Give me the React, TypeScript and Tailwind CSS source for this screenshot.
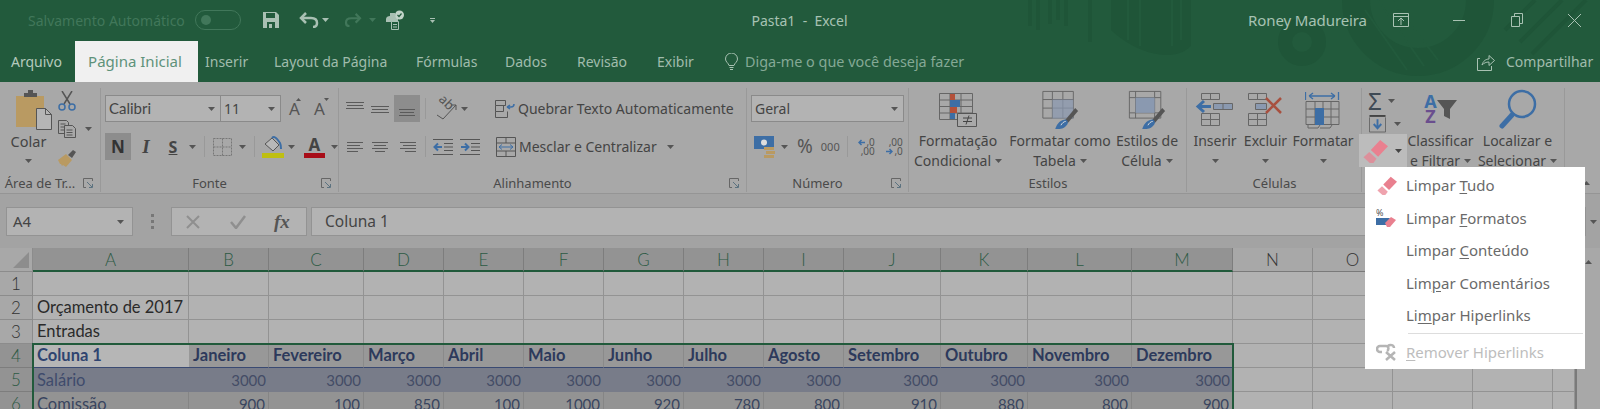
import React from "react";

const UI = "font-['Noto_Sans',sans-serif]";
const CELL = "font-['Lato',sans-serif]";

function Caret({ c = "#555", className = "" }: { c?: string; className?: string }) {
  return (
    <svg width="7" height="4" viewBox="0 0 7 4" className={`block shrink-0 ${className}`}>
      <path d="M0 0h7L3.5 4z" fill={c} />
    </svg>
  );
}

function Launcher() {
  return (
    <svg width="10" height="10" viewBox="0 0 10 10" className="block shrink-0" fill="none" stroke="#666">
      <path d="M9.5 3V.5H.5v9H3" />
      <path d="M4 4l5 5M9.5 6v3.5H6" stroke="#5b7280" />
    </svg>
  );
}

function Group({ w, label, launcher, children }: { w: string; label: string; launcher?: boolean; children: React.ReactNode }) {
  return (
    <div className={`${w} shrink-0 flex flex-col pt-[6px] relative`}>
      <div className="h-[85px] flex">{children}</div>
      <div className="h-[20px] flex items-center text-[13px] text-[#4a4a4a] leading-none">
        <div className="flex-1 text-center whitespace-nowrap">{label}</div>
        {launcher ? <div className="w-[16px] mr-[5px] flex justify-center"><Launcher /></div> : null}
      </div>
      <div className="absolute right-0 top-[6px] bottom-[1px] w-px bg-[#999999]" />
    </div>
  );
}

function LargeBtn({ w, icon, lines, caretLine, blank }: { w: string; icon: React.ReactNode; lines: string[]; caretLine?: boolean; blank?: boolean }) {
  return (
    <div className={`${w} shrink-0 flex flex-col items-center`}>
      <div className="h-[43px] flex items-center justify-center">{icon}</div>
      {lines.map((l, i) => (
        <div key={i} className="h-[20px] leading-[20px] whitespace-nowrap flex items-center gap-[4px] text-[#444444]">
          {l}
          {caretLine && i === lines.length - 1 ? <Caret /> : null}
        </div>
      ))}
      {blank ? <div className="h-[20px] flex items-center"><Caret /></div> : null}
    </div>
  );
}

function Lines({ ys, w = 18 }: { ys: [number, number, number][]; w?: number }) {
  return (
    <svg width={w} height="16" viewBox={`0 0 ${w} 16`} className="block shrink-0" stroke="#5a5a5a" fill="none">
      {ys.map(([y, a, b], i) => <path key={i} d={`M${a} ${y}.5H${b}`} />)}
    </svg>
  );
}

function Eraser({ s = 24, c = "#e9808f" }: { s?: number; c?: string }) {
  return (
    <svg width={s} height={s} viewBox="0 0 24 24" className="block shrink-0">
      <path d="M7.500 11.500L16.500 2 24 8l-9.500 10z" fill={c} />
      <path d="M6 13.500l7 6.500-3 4H6.500L.5 18.500z" fill={c} opacity="0.72" />
    </svg>
  );
}

const PaintBrush = () => (
  <g>
    <path d="M25 32l11-13 3 3-11 13z" fill="#555" />
    <path d="M15 41c2-6 6-10 11-10 3 1 3 5 0 7-3 3-7 3-11 3z" fill="#3d6ea5" />
    <path d="M21 37c1-2 3-4 5-4" stroke="#ddd" fill="none" />
  </g>
);

function CellIcon() {
  return (
    <svg width="40" height="36" viewBox="0 0 40 36" className="block" fill="none">
      <path d="M1.500 1.500h33v26h-33zM1.500 8h33M1.500 14.500h33M1.500 21h33M12 1.500v26M23 1.500v26" stroke="#666" />
      <path d="M12 2h5v6h-5z" fill="#b4513a" />
      <path d="M12 8h10v7H12z" fill="#3d6ea5" />
      <path d="M12 15h7v6h-7z" fill="#b4513a" />
      <path d="M12 21h5v6h-5z" fill="#3d6ea5" />
      <path d="M19.500 21.500h19v13h-19z" fill="#a9a9a9" stroke="#555" />
      <path d="M25 26h9M25 29.500h9M31 23.500l-3 9" stroke="#444" />
    </svg>
  );
}

function TableStyleIcon() {
  return (
    <svg width="40" height="40" viewBox="0 0 40 42" className="block" fill="none">
      <path d="M2 1.500h32v28H2zM2 10h32M2 19h32M12 1.500v28M23 1.500v28" stroke="#666" />
      <path d="M12 10h22v20H12z" fill="#8a99b0" opacity="0.7" />
      <PaintBrush />
    </svg>
  );
}

function CellStyleIcon() {
  return (
    <svg width="40" height="40" viewBox="0 0 40 42" className="block" fill="none">
      <path d="M1.500 1.500h33v28h-33zM1.500 8h33M1.500 24h33M8 1.500v28M28 1.500v28" stroke="#666" />
      <path d="M8 8h20v16H8z" fill="#8a99b0" />
      <PaintBrush />
    </svg>
  );
}

const letters = ["A", "B", "C", "D", "E", "F", "G", "H", "I", "J", "K", "L", "M", "N", "O", "P", "Q", ""];
const months = ["Janeiro", "Fevereiro", "Março", "Abril", "Maio", "Junho", "Julho", "Agosto", "Setembro", "Outubro", "Novembro", "Dezembro"];
const commissions = [900, 100, 850, 100, 1000, 920, 780, 800, 910, 880, 800, 900];

function RowCells({ n }: { n: number }) {
  const sel = n >= 4;
  const out: React.ReactNode[] = [];
  out.push(
    <div key="h" className={`flex items-center justify-center border-r border-b ${sel ? "bg-[#939393] text-[#2c5a44] border-[#7d7d7d]" : "bg-[#a8a8a8] text-[#333333] border-[#8c8c8c]"} text-[17px] font-light`}>{n}</div>
  );
  for (let i = 0; i < 18; i++) {
    const tableCol = i <= 12;
    let content = "";
    let cls = "border-r border-b border-[#939393] bg-[#b2b2b2] text-[#2a2a2a]";
    let align = "justify-start pl-[4px]";
    if (n === 2 && i === 0) content = "Orçamento de 2017";
    if (n === 3 && i === 0) content = "Entradas";
    if (n === 4 && tableCol) {
      content = i === 0 ? "Coluna 1" : months[i - 1];
      cls = i === 0
        ? "border-b border-[#3a4a72] bg-[#b6b6b6] text-[#2f4470] font-bold"
        : "border-r border-b border-b-[#3a4a72] border-r-[#8a8a8a] bg-[#989898] text-[#2d3a5c] font-bold";
    }
    if (n === 5 && tableCol) {
      cls = i === 0 ? "bg-[#787c89] text-[#3f4b6c]" : "bg-[#787c89] text-[#444c66] text-[15px]";
      content = i === 0 ? "Salário" : "3000";
      align = i === 0 ? "justify-start pl-[4px]" : "justify-end pr-[3px]";
    }
    if (n === 6 && tableCol) {
      cls = i === 0 ? "border-r border-[#858585] bg-[#939393] text-[#39455f]" : "border-r border-[#858585] bg-[#939393] text-[#39455f] text-[15px]";
      content = i === 0 ? "Comissão" : String(commissions[i - 1]);
      align = i === 0 ? "justify-start pl-[4px]" : "justify-end pr-[3px]";
    }
    out.push(
      <div key={i} className={`flex items-center whitespace-nowrap overflow-visible ${align} ${cls}`}>{content}</div>
    );
  }
  out.push(<div key="sb" className="bg-[#a8a8a8] border-l-2 border-[#7a7a7a]" />);
  return <>{out}</>;
}

function MenuItem({ icon, pre, u, post, disabled }: { icon?: React.ReactNode; pre: string; u: string; post: string; disabled?: boolean }) {
  return (
    <div className={`h-[32.500px] flex items-center ${disabled ? "text-[#bdbdbd]" : "text-[#6a6a6a]"}`}>
      <div className="w-[41px] flex justify-center pl-[2px]">{icon}</div>
      <span>{pre}<span className="underline underline-offset-2">{u}</span>{post}</span>
    </div>
  );
}

export default function App() {
  const gridTemplate = "33px 156px 80px 95px 80px 80px 80px 80px 80px 80px 97px 87px 104px 101px 80px 80px 80px 80px 22px 25px";
  return (
    <div className={`w-[1600px] h-[409px] overflow-hidden relative bg-[#a3a3a3] ${UI} text-[14px]`}>
      <div className="relative bg-[#225a3c]">
        <svg width="600" height="82" viewBox="0 0 600 82" className="absolute left-[1000px] top-0" fill="none">
          <g stroke="#1f5538" strokeWidth="4">
            <path d="M30 0v26M38 0v30M50 0v24M58 0v20M66 0v26M90 0v42" />
          </g>
          <path d="M111 0h80v46c-10 10-24 10-34 8-16-2-36-14-46-24z" fill="#1f5538" />
          <path d="M128 0v40M140 0v46M172 0v46M181 0v40" stroke="#225a3c" strokeWidth="2" />
          <circle cx="302" cy="42" r="17" stroke="#1f5538" strokeWidth="14" />
          <circle cx="418" cy="0" r="62" stroke="#1f5538" strokeWidth="28" />
          <path d="M365 10l42 60M378 0l46 66M392 0l46 60" stroke="#225a3c" strokeWidth="2" />
          <path d="M505 30l30-30M520 42l42-42M532 54l54-54" stroke="#1f5538" strokeWidth="4" />
        </svg>

        {/* Title bar */}
        <div className="h-[40px] flex items-center text-[#a7c2b3] relative">
          <div className="ml-[28px] w-[167px] text-[#41775a] whitespace-nowrap">Salvamento Automático</div>
          <div className="w-[46px] h-[20px] rounded-full border border-[#41775a] flex items-center pl-[5px]"><div className="w-[10px] h-[10px] rounded-full bg-[#41775a]" /></div>
          <svg width="16" height="16" viewBox="0 0 16 16" className="ml-[22px] block">
            <path d="M0 0h13l3 3v13H0z" fill="#a9c0b3" />
            <path d="M3 1h9v5H3z" fill="#225a3c" />
            <path d="M4 10h8v6H4z" fill="#225a3c" />
            <path d="M6 12h3v4H6z" fill="#a9c0b3" />
          </svg>
          <svg width="20" height="16" viewBox="0 0 20 16" className="ml-[20px] block" fill="none" stroke="#a9c0b3" strokeWidth="2.500">
            <path d="M7 1L2 6l5 5" />
            <path d="M2 6h10c4 0 6 2 6 5 0 2-1 4-4 4" />
          </svg>
          <Caret c="#a9c0b3" className="ml-[3px]" />
          <svg width="18" height="14" viewBox="0 0 20 16" className="ml-[15px] block" fill="none" stroke="#41775a" strokeWidth="2.500">
            <path d="M13 1l5 5-5 5" />
            <path d="M18 6H8C4 6 2 8 2 11c0 2 1 4 4 4" />
          </svg>
          <Caret c="#41775a" className="ml-[7px]" />
          <svg width="20" height="20" viewBox="0 0 20 20" className="ml-[9px] block" fill="none">
            <path d="M1 9c0-2 2-3 4-3V3h5v3c2 0 3 1 3 3v3H1z" fill="#a9c0b3" />
            <circle cx="14.500" cy="5" r="4.500" fill="#c2d4c9" />
            <path d="M12.500 5l1.500 1.500 2.500-3" stroke="#225a3c" strokeWidth="1.200" />
            <path d="M6.500 11.500h7v8h-7z" fill="#225a3c" stroke="#a9c0b3" />
            <path d="M8 14.500h4M8 17h4" stroke="#a9c0b3" />
          </svg>
          <div className="ml-[25px] w-[5px] flex flex-col gap-[1px]"><div className="h-px bg-[#a9c0b3]" /><Caret c="#a9c0b3" className="w-[5px] h-[3px]" /></div>
          <div className="ml-[316px] w-[97px] text-center whitespace-nowrap">Pasta1 &nbsp;-&nbsp; Excel</div>
          <div className="ml-[400px] w-[113px] whitespace-nowrap text-[15px] tracking-[-0.1px]">Roney Madureira</div>
          <svg width="16" height="14" viewBox="0 0 16 14" className="ml-[32px] block" fill="none" stroke="#a9c2b3">
            <path d="M.5.500h15v13H.5zM.5 3.500h15M8 12V5M5 8l3-3 3 3" />
          </svg>
          <div className="ml-[44px] w-[12px] h-px bg-[#a9c2b3]" />
          <svg width="12" height="14" viewBox="0 0 12 14" className="ml-[46px] block" fill="none" stroke="#a9c2b3">
            <path d="M.5 3.500h8v10h-8zM3.500 3.500V.5h8v10h-3" />
          </svg>
          <svg width="13" height="13" viewBox="0 0 13 13" className="ml-[45px] block" fill="none" stroke="#a9c2b3">
            <path d="M0 0l13 13M13 0L0 13" />
          </svg>
        </div>

        {/* Tabs */}
        <div className="h-[42px] relative flex items-end text-[#a0bcac] z-10">
          <div className="flex items-center h-[41px] w-full whitespace-nowrap">
            <div className="ml-[11px] w-[64px] text-[#b5cabd]">Arquivo</div>
            <div className="w-[123px] h-[41px] bg-[#f0f0f0] text-[#5e927a] text-[15px] flex items-center justify-center pr-[3px]">Página Inicial</div>
            <div className="ml-[7px] w-[69px]">Inserir</div>
            <div className="w-[142px]">Layout da Página</div>
            <div className="w-[89px]">Fórmulas</div>
            <div className="w-[72px]">Dados</div>
            <div className="w-[80px]">Revisão</div>
            <div className="w-[68px]">Exibir</div>
            <svg width="13" height="18" viewBox="0 0 13 18" className="block" fill="none" stroke="#a9c2b3">
              <path d="M4 12.500C3.500 10 .5 9 .5 6a6 6 0 0 1 12 0c0 3-3 4-3.500 6.500zM4.500 14.500h4M5 16.500h3" />
            </svg>
            <div className="ml-[7px] w-[732px] text-[#85a996] text-[14.400px]">Diga-me o que você deseja fazer</div>
            <svg width="18" height="18" viewBox="0 0 18 18" className="block" fill="none" stroke="#a9c2b3">
              <path d="M3 5.500H.5v12h14V13M5 12c1-4 4-6 7-6V2.500l5.500 5-5.500 5V9c-3 0-5 1-7 3z" />
            </svg>
            <div className="ml-[11px]">Compartilhar</div>
          </div>
        </div>
      </div>

      {/* Ribbon */}
      <div className="h-[112px] bg-[#a8a8a8] flex border-b border-[#959595] text-[14px] text-[#444444]">
        <Group w="w-[101px]" label="Área de Tr..." launcher>
          <div className="w-[57px] flex flex-col items-center">
            <div className="h-[43px] flex items-center">
              <svg width="36" height="40" viewBox="0 0 36 40" className="block ml-[10px]">
                <path d="M0 6h28v31H0z" fill="#b99a62" />
                <path d="M8 3h4V0h5v3h4v4H8z" fill="#555" />
                <path d="M20.500 18.500h9l6 6v15h-15z" fill="#b5b5b5" stroke="#555" />
                <path d="M29.500 18.500v6h6" fill="none" stroke="#555" />
              </svg>
            </div>
            <div className="h-[20px] leading-[20px] text-[14.500px]">Colar</div>
            <div className="h-[20px] flex items-center"><Caret /></div>
          </div>
          <div className="flex flex-col ml-[1px]">
            <div className="h-[26px] flex items-center">
              <svg width="18" height="20" viewBox="0 0 18 20" fill="none" className="block" strokeWidth="1.500">
                <path d="M4 0l8 13M14 0L6 13" stroke="#555" />
                <circle cx="4" cy="16" r="3" stroke="#3d6ea5" />
                <circle cx="14" cy="16" r="3" stroke="#3d6ea5" />
              </svg>
            </div>
            <div className="h-[30px] flex items-center gap-[9px]">
              <svg width="18" height="18" viewBox="0 0 18 18" fill="none" stroke="#555" className="block">
                <path d="M.5.500h8l2 2v11H.5zM2.500 4h5M2.500 7h5M2.500 10h4" />
                <path d="M6.500 5.500h8l3 3v9h-11z" fill="#a8a8a8" />
                <path d="M8.500 10h6M8.500 12.500h6M8.500 15h6" />
              </svg>
              <Caret />
            </div>
            <div className="h-[29px] flex items-center">
              <svg width="18" height="17" viewBox="0 0 18 17" className="block">
                <path d="M10 5l5-5 3 2-4 6z" fill="#555" />
                <path d="M0 10l8-6 6 6-6 7-3-2-1 1-1-2-1 0z" fill="#b99a62" />
              </svg>
            </div>
          </div>
        </Group>

        <Group w="w-[238px]" label="Fonte" launcher>
          <div className="flex flex-col pl-[4px] pt-[7px]">
            <div className="flex items-center h-[27px]">
              <div className="w-[116px] h-[27px] bg-[#b3b3b3] border border-[#8a8a8a] flex items-center justify-between px-[3px] pr-[5px] font-['Lato',sans-serif] text-[15px]">Calibri<Caret /></div>
              <div className="w-[60px] h-[27px] bg-[#b3b3b3] border border-[#8a8a8a] border-l-0 flex items-center justify-between px-[3px] pr-[5px] text-[14px]">11<Caret /></div>
              <div className="ml-[8px] w-[22px] text-[17px] leading-none text-[#555] relative">A<div className="absolute left-[7px] -top-[2px]"><Caret c="#555" className="rotate-180 w-[5px] h-[3px]" /></div></div>
              <div className="ml-[3px] w-[20px] text-[17px] leading-none text-[#555] relative">A<div className="absolute left-[10px] -top-[2px]"><Caret c="#555" className="w-[5px] h-[3px]" /></div></div>
            </div>
            <div className="flex items-center h-[27px] mt-[11px]">
              <div className="w-[26px] h-[27px] bg-[#8d8d8d] flex items-center justify-center font-bold text-[17px] text-[#333]">N</div>
              <div className="w-[30px] text-center font-['Liberation_Serif',serif] italic font-bold text-[19px] text-[#444] leading-none">I</div>
              <div className="w-[24px] text-center font-bold text-[16px] text-[#444] underline leading-none">S</div>
              <Caret className="ml-[4px]" />
              <div className="w-px h-[21px] bg-[#999] ml-[8px]" />
              <svg width="20" height="18" viewBox="0 0 20 18" fill="none" className="block ml-[8px]" stroke="#777" strokeDasharray="2 1">
                <path d="M.5.500h18v17H.5zM9.500.5v17M.5 9h18" />
              </svg>
              <Caret className="ml-[6px]" />
              <div className="w-px h-[21px] bg-[#999] ml-[8px]" />
              <svg width="24" height="22" viewBox="0 0 24 22" className="block ml-[6px]" fill="none">
                <path d="M4 8l7-6 7 7-6 6z" stroke="#555" fill="#b8b8b8" />
                <path d="M11 2c2-2 4-1 8 5 1 2 1 4 1 6" stroke="#3d6ea5" strokeWidth="2" />
                <path d="M1 17h22v5H1z" fill="#bfbf12" />
              </svg>
              <Caret className="ml-[3px]" />
              <div className="ml-[9px] w-[21px] flex flex-col items-center">
                <div className="font-bold text-[17px] leading-[17px] text-[#444]">A</div>
                <div className="w-[21px] h-[5px] bg-[#a80d18]" />
              </div>
              <Caret className="ml-[6px]" />
            </div>
          </div>
        </Group>

        <Group w="w-[408px]" label="Alinhamento" launcher>
          <div className="flex flex-col pl-[6px] pt-[7px]">
            <div className="flex items-center h-[27px]">
              <div className="w-[21px]"><Lines ys={[[1, 1, 19], [4, 2, 18], [7, 1, 19]]} w={20} /></div>
              <div className="w-[28px] flex justify-center"><Lines ys={[[5, 1, 19], [8, 2, 18], [11, 1, 19]]} w={20} /></div>
              <div className="w-[26px] h-[27px] bg-[#8d8d8d] flex items-center justify-center"><Lines ys={[[8, 2, 18], [11, 3, 17], [14, 2, 18]]} w={20} /></div>
              <div className="w-px h-[21px] bg-[#999] ml-[5px]" />
              <svg width="26" height="22" viewBox="0 0 26 22" className="block ml-[7px] overflow-visible" fill="none" stroke="#555">
                <text x="5" y="2" fontSize="13" fill="#555" stroke="none" transform="rotate(45 5 2)">ab</text>
                <path d="M4 17L10 21L23 7M23 7h-5M23 7v5" />
              </svg>
              <Caret className="ml-[2px]" />
              <div className="ml-[27px] flex items-center">
                <svg width="20" height="18" viewBox="0 0 20 18" className="block" fill="none" stroke="#555">
                  <path d="M.5.500h10v5H.5zM.5 5.500v6h8v-6M.5 11.500v6h12v-6" />
                  <path d="M12 7h4c2 0 3-1 3-3M12 7l3-2M12 7l3 2" stroke="#3d6ea5" strokeWidth="1.500" />
                </svg>
                <div className="ml-[3px] whitespace-nowrap text-[14px]">Quebrar Texto Automaticamente</div>
              </div>
            </div>
            <div className="flex items-center h-[27px] mt-[11px]">
              <div className="w-[27px] pl-[2px]"><Lines ys={[[3, 0, 16], [6, 0, 13], [9, 0, 16], [12, 0, 11]]} w={17} /></div>
              <div className="w-[28px]"><Lines ys={[[3, 0, 16], [6, 2, 14], [9, 0, 16], [12, 3, 13]]} w={17} /></div>
              <div className="w-[20px]"><Lines ys={[[3, 0, 16], [6, 3, 16], [9, 0, 16], [12, 5, 16]]} w={17} /></div>
              <div className="w-px h-[21px] bg-[#999] ml-[5px]" />
              <svg width="20" height="18" viewBox="0 0 20 18" className="block ml-[7px]" fill="none">
                <path d="M0 1.500h20M0 16.500h20M11 5.500h9M11 9h9M11 12.500h9" stroke="#555" />
                <path d="M9 9H2M5 5.500L1.500 9 5 12.500" stroke="#3d6ea5" strokeWidth="2" />
              </svg>
              <svg width="20" height="18" viewBox="0 0 20 18" className="block ml-[7px]" fill="none">
                <path d="M0 1.500h20M0 16.500h20M11 5.500h9M11 9h9M11 12.500h9" stroke="#555" />
                <path d="M1 9h7M5 5.500L8.500 9 5 12.500" stroke="#3d6ea5" strokeWidth="2" />
              </svg>
              <div className="ml-[16px] flex items-center">
                <svg width="20" height="20" viewBox="0 0 20 20" className="block" fill="none" stroke="#555">
                  <path d="M.5.500h19v19H.5zM.5 6h19M.5 14h19M10 .5V6M10 14v5.500" />
                  <path d="M3 10h14M6 7.500L3 10l3 2.500M14 7.500l3 2.500-3 2.500" stroke="#3d6ea5" />
                </svg>
                <div className="ml-[3px] whitespace-nowrap text-[14px]">Mesclar e Centralizar</div>
                <Caret className="ml-[10px]" />
              </div>
            </div>
          </div>
        </Group>

        <Group w="w-[162px]" label="Número" launcher>
          <div className="flex flex-col pl-[4px] pt-[7px]">
            <div className="w-[153px] h-[27px] bg-[#b3b3b3] border border-[#8a8a8a] flex items-center justify-between px-[3px] pr-[5px] text-[14px]">Geral<Caret /></div>
            <div className="flex items-center h-[27px] mt-[11px]">
              <svg width="22" height="22" viewBox="0 0 22 22" className="block ml-[3px]">
                <path d="M0 0h20v13H0z" fill="#3d6ea5" />
                <circle cx="10" cy="6.500" r="3" fill="#ddd" />
                <path d="M10 11h10v3H10zM12 15h9v3h-9zM10 19h10v3H10z" fill="#b99a62" />
              </svg>
              <Caret className="ml-[5px]" />
              <div className="ml-[9px] text-[19px] leading-none text-[#555]">%</div>
              <div className="ml-[8px] text-[11px] leading-none text-[#555] w-[20px]">000</div>
              <div className="w-px h-[21px] bg-[#999] ml-[6px]" />
              <div className="ml-[9px] flex flex-col text-[10px] leading-[9px] text-[#555] w-[18px] items-end">
                <div className="flex items-center gap-[1px]">
                  <svg width="7" height="7" viewBox="0 0 7 7" className="block" fill="none" stroke="#3d6ea5" strokeWidth="1.500"><path d="M7 3.500H1M3.500 1L1 3.500 3.500 6" /></svg>,0
                </div>
                <div>,00</div>
              </div>
              <div className="ml-[10px] flex flex-col text-[10px] leading-[9px] text-[#555] w-[18px] items-end">
                <div>,00</div>
                <div className="flex items-center gap-[1px]">
                  <svg width="7" height="7" viewBox="0 0 7 7" className="block" fill="none" stroke="#3d6ea5" strokeWidth="1.500"><path d="M0 3.500h6M3.500 1L6 3.500 3.500 6" /></svg>,0
                </div>
              </div>
            </div>
          </div>
        </Group>

        <Group w="w-[278px]" label="Estilos">
          <LargeBtn w="w-[98px]" icon={<CellIcon />} lines={["Formatação", "Condicional"]} caretLine />
          <LargeBtn w="w-[106px]" icon={<TableStyleIcon />} lines={["Formatar como", "Tabela"]} caretLine />
          <LargeBtn w="w-[68px]" icon={<CellStyleIcon />} lines={["Estilos de", "Célula"]} caretLine />
        </Group>

        <Group w="w-[175px]" label="Células">
          <LargeBtn w="w-[56px]" blank lines={["Inserir"]} icon={
            <svg width="40" height="36" viewBox="0 0 40 36" className="block" fill="none">
              <path d="M6.500 1.500h18v6h-18zM15.500 1.500v6M6.500 21.500h18v12h-18zM6.500 27.500h18M15.500 21.500v12" stroke="#666" />
              <path d="M18.500 11.500h19v6h-19zM28 11.500v6" stroke="#666" fill="#8a99b0" />
              <path d="M16 14.500H3M9 9l-6 5.500L9 20" stroke="#3d6ea5" strokeWidth="3" />
            </svg>
          } />
          <LargeBtn w="w-[45px]" blank lines={["Excluir"]} icon={
            <svg width="38" height="36" viewBox="0 0 38 36" className="block" fill="none">
              <path d="M1.500 1.500h18v6h-18zM10.500 1.500v6M1.500 21.500h18v12h-18zM1.500 27.500h18M10.500 21.500v12M8.500 11.500h11v6h-11z" stroke="#666" />
              <path d="M9 12h10v5H9z" fill="#8a99b0" />
              <path d="M19 6l15 15M34 6L19 21" stroke="#a8503f" strokeWidth="2.500" />
            </svg>
          } />
          <LargeBtn w="w-[70px]" blank lines={["Formatar"]} icon={
            <svg width="36" height="38" viewBox="0 0 36 38" className="block" fill="none">
              <path d="M.5 1v8M33.500 1v8M4 5h26M4 5l4-3M4 5l4 3M30 5l-4-3M30 5l-4 3" stroke="#3d6ea5" strokeWidth="1.300" />
              <path d="M1 10.500h33v23H1zM1 18h33M1 26h33M10 10.500v23M18 10.500v23M26 10.500v23" stroke="#666" />
              <path d="M10 17h9v17h-9z" fill="#3d6ea5" />
              <path d="M3 34v3h10l2-3M15 37h10l2-3" stroke="#666" />
            </svg>
          } />
        </Group>

        <Group w="w-[203px]" label="">
          <div className="w-[42px] -ml-[3px] flex flex-col shrink-0">
            <div className="h-[26px] pl-[9px] flex items-center gap-[6px]">
              <div className="text-[24px] leading-none text-[#3f4a55]">Σ</div>
              <Caret />
            </div>
            <div className="h-[20px] pl-[10px] flex items-center gap-[8px]">
              <svg width="18" height="18" viewBox="0 0 18 18" className="block" fill="none">
                <path d="M.5 0h17" stroke="#444" strokeWidth="3" />
                <path d="M.5 2v15.500h17V2" stroke="#666" />
                <path d="M9 4v9M5 9l4 4.500L13 9" stroke="#3d6ea5" strokeWidth="2" />
              </svg>
              <Caret />
            </div>
            <div className="h-[33px] w-[48px] bg-[#bcbcbc] flex items-center pl-[4px] gap-[7px] shrink-0">
              <Eraser s={25} />
              <Caret c="#444" />
            </div>
          </div>
          <LargeBtn w="w-[79px]" icon={
            <div className="flex items-center -mt-[2px]">
              <div className="flex flex-col items-center font-bold leading-[15px] text-[18px]"><span className="text-[#3d6ea5]">A</span><span className="text-[#6a4e8e]">Z</span></div>
              <svg width="20" height="22" viewBox="0 0 20 22" className="block"><path d="M0 2h20l-7 9v10l-6-3v-7z" fill="#555" /></svg>
            </div>
          } lines={["Classificar", "e Filtrar"]} caretLine />
          <LargeBtn w="w-[75px]" icon={
            <svg width="38" height="40" viewBox="0 0 38 40" className="block -mt-[2px]" fill="none">
              <circle cx="23" cy="15" r="13" stroke="#3d6ea5" strokeWidth="2.500" />
              <path d="M13 26L3 37" stroke="#3d6ea5" strokeWidth="5" strokeLinecap="round" />
            </svg>
          } lines={["Localizar e", "Selecionar"]} caretLine />
        </Group>
        <div className="flex-1 flex items-end justify-end pr-[10px] pb-[8px]"><Caret c="#555" className="rotate-180" /></div>
      </div>

      {/* Formula bar */}
      <div className="h-[54px] flex pt-[13px] pl-[6px] bg-[#a3a3a3]">
        <div className="w-[127px] h-[29px] bg-[#b3b3b3] border border-[#939393] flex items-center justify-between pl-[6px] pr-[8px] text-[15px] text-[#444]">A4<Caret /></div>
        <div className="w-[38px] h-[29px] flex flex-col items-center justify-center gap-[3px]">
          <div className="w-[3px] h-[3px] bg-[#777]" /><div className="w-[3px] h-[3px] bg-[#777]" /><div className="w-[3px] h-[3px] bg-[#777]" />
        </div>
        <div className="w-[136px] h-[29px] bg-[#b3b3b3] border border-[#939393] flex items-center">
          <svg width="14" height="14" viewBox="0 0 14 14" className="block ml-[14px]" fill="none" stroke="#8f8f8f" strokeWidth="2"><path d="M1 1l12 12M13 1L1 13" /></svg>
          <svg width="16" height="14" viewBox="0 0 16 14" className="block ml-[30px]" fill="none" stroke="#8f8f8f" strokeWidth="2.500"><path d="M1 7l5 6L15 1" /></svg>
          <div className="ml-[28px] font-['Liberation_Serif',serif] italic font-bold text-[19px] text-[#555] leading-none">fx</div>
        </div>
        <div className="ml-[4px] w-[1275px] h-[29px] bg-[#b3b3b3] border border-[#939393] flex items-center pl-[13px] text-[15.500px] text-[#444]">Coluna 1</div>
        <div className="flex-1 flex items-center justify-center h-[29px]"><Caret /></div>
      </div>

      {/* Sheet */}
      <div className={`relative grid ${CELL} text-[16.500px] leading-none`} style={{ gridTemplateColumns: gridTemplate, gridTemplateRows: "24px repeat(6, 24px)" }}>
        <div className="bg-[#a8a8a8] border-r border-b border-[#8c8c8c] flex items-end justify-end pr-[3px] pb-[3px]">
          <svg width="16" height="16" viewBox="0 0 16 16" className="block"><path d="M16 0v16H0z" fill="#8d8d8d" /></svg>
        </div>
        {letters.map((l, i) => (
          <div key={i} className={`flex items-center justify-center text-[17px] font-light border-r ${i <= 12 ? "bg-[#939393] text-[#2c5a44] border-[#7d7d7d] border-b-2 border-b-[#215a3b]" : "bg-[#a8a8a8] text-[#333333] border-[#8c8c8c] border-b border-b-[#7a7a7a]"}`}>{l}</div>
        ))}
        <div className="bg-[#a8a8a8] border-l-2 border-[#7a7a7a] flex items-center justify-center pt-[4px]"><Caret c="#555" className="rotate-180" /></div>
        {[1, 2, 3, 4, 5, 6].map((n) => <RowCells key={n} n={n} />)}
        <div className="absolute left-[32px] top-[95px] w-[1202px] h-[80px] border-2 border-[#215a3b] pointer-events-none" />
      </div>

      {/* Menu */}
      <div className="absolute left-[1365px] top-[167px] w-[220px] h-[202px] bg-white pt-[2px] text-[15px]">
        <MenuItem pre="Limpar " u="T" post="udo" icon={<Eraser s={20} />} />
        <MenuItem pre="Limpar " u="F" post="ormatos" icon={
          <svg width="21" height="20" viewBox="0 0 21 20" className="block">
            <text x="0" y="8" fontSize="9" fill="#555">%</text>
            <path d="M0 10h14l-4 7H0z" fill="#3d6ea5" />
            <path d="M9 15l6-6 5 3-6 7h-3z" fill="#e9808f" />
          </svg>
        } />
        <MenuItem pre="Limpar " u="C" post="onteúdo" />
        <MenuItem pre="Lim" u="p" post="ar Comentários" />
        <MenuItem pre="Li" u="m" post="par Hiperlinks" />
        <div className="h-px bg-[#dddddd] ml-[43px] mr-[2px] mt-[1px]" />
        <div className="mt-[2px]">
          <MenuItem disabled pre="" u="R" post="emover Hiperlinks" icon={
            <svg width="22" height="18" viewBox="0 0 22 18" className="block" fill="none" stroke="#b5b5b5" strokeWidth="2.500">
              <path d="M6 9H4a3 3 0 0 1 0-6h6c3 0 3 4 1 5M12 3c2-2 6-1 6 2" />
              <path d="M10 9l9 8M19 9l-9 8" />
            </svg>
          } />
        </div>
      </div>
    </div>
  );
}
